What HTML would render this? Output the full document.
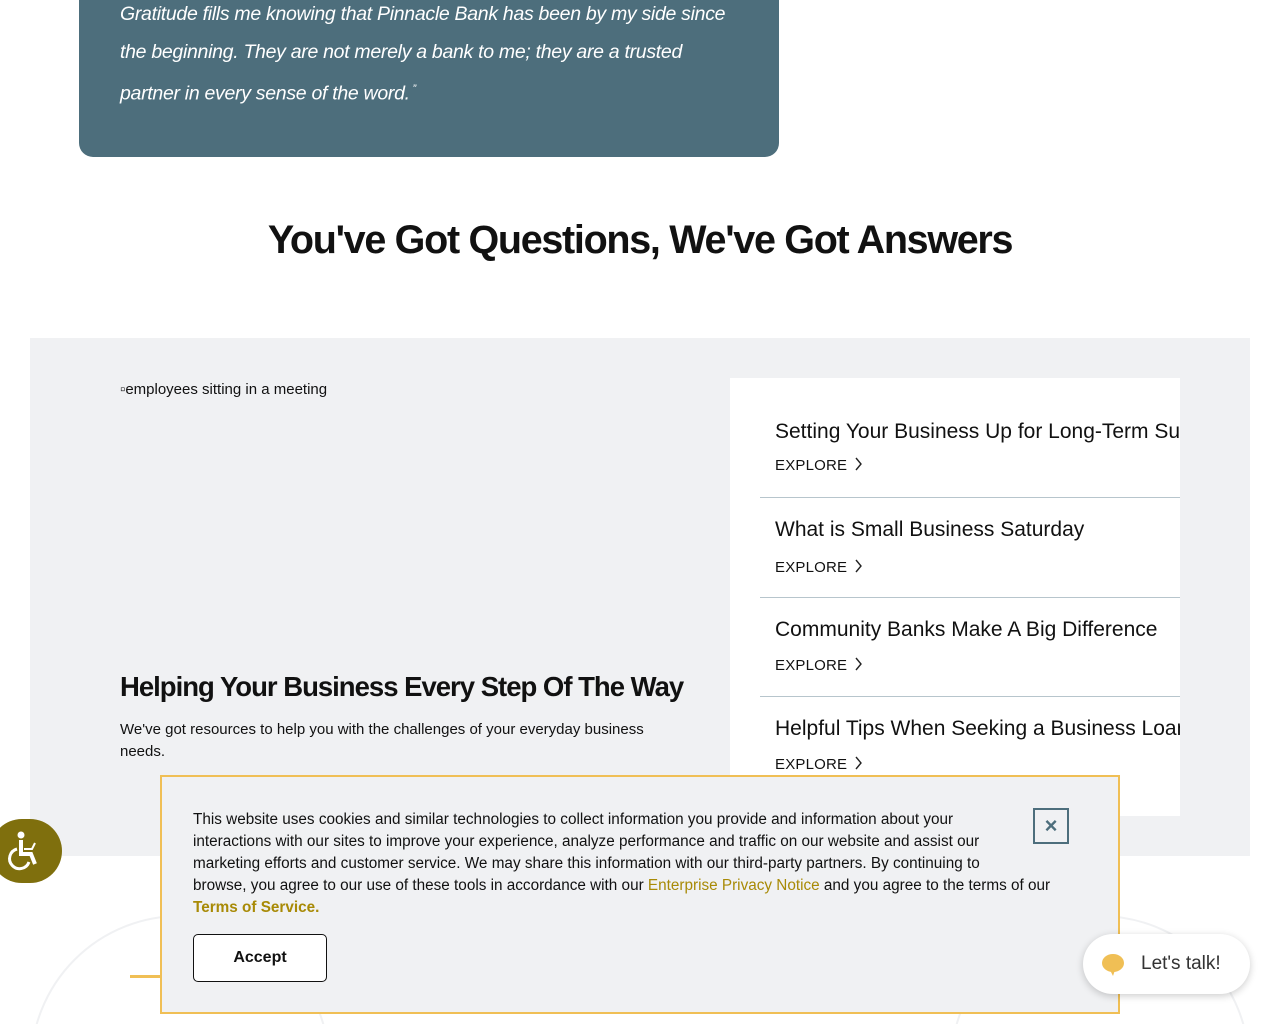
<!DOCTYPE html>
<html><head><meta charset="utf-8"><style>
*{margin:0;padding:0;box-sizing:border-box}
html,body{width:1280px;height:1024px;overflow:hidden}
body{position:relative;background:#fff;font-family:"Liberation Sans",sans-serif;color:#111}
.wrap{position:absolute;left:0;top:0;width:1280px;height:1024px;overflow:hidden}
.quote{position:absolute;left:79px;top:0;width:700px;height:157px;background:#4d6e7c;border-radius:0 0 14px 14px;color:#fff;font-style:italic;font-size:19.5px;line-height:37.5px;padding:0 0 0 41px;letter-spacing:-0.3px;white-space:nowrap}
.quote div{position:relative;top:-4px}
h1{position:absolute;top:218px;left:0;width:1280px;text-align:center;font-size:39.5px;font-weight:bold;letter-spacing:-1.3px}
.gray{position:absolute;left:30px;top:338px;width:1220px;height:518px;background:#f0f1f3}
.alt{position:absolute;left:120px;top:381px;font-size:15px}
.h2{position:absolute;left:120px;top:671px;font-size:27.5px;font-weight:bold;letter-spacing:-1px}
.p{position:absolute;left:120px;top:719px;width:560px;font-size:15px;line-height:22px}
.card{position:absolute;left:730px;top:378px;width:450px;height:438px;background:#fff;overflow:hidden}
.item{position:absolute;left:30px;width:440px;border-bottom:1px solid #b7c5cc;height:100px}
.item .t{position:absolute;left:15px;top:20px;font-size:21px;white-space:nowrap}
.item .e{position:absolute;left:15px;top:60px;font-size:15px;letter-spacing:.2px}
.item .e svg{vertical-align:-2px;margin-left:6px}
.cookie{position:absolute;left:160px;top:775px;width:960px;height:239px;background:#f0f1f3;border:2px solid #f0bf55}
.ctext{position:absolute;left:31px;top:32px;font-size:15.3px;line-height:22px;letter-spacing:0;white-space:nowrap}
.ctext b{color:#a88a06;font-weight:normal}
.acc{position:absolute;left:31px;top:157px;width:134px;height:48px;border:1px solid #111;border-radius:5px;background:#fff;text-align:center;line-height:46px;font-weight:bold;font-size:16px}
.x{position:absolute;left:871px;top:31px;width:36px;height:36px;border:2px solid #4d6e7c;color:#4d6e7c;text-align:center;line-height:32px;font-size:22px;font-weight:bold}
.acc11y{position:absolute;left:-10px;top:819px;width:72px;height:64px;border-radius:32px;background:#7f6f0d}
.talk{position:absolute;left:1083px;top:934px;width:167px;height:60px;border-radius:30px;background:#fff;box-shadow:0 2px 8px rgba(0,0,0,.2);font-size:19px;color:#333}
.clip{position:absolute;left:0;top:900px;width:1280px;height:124px;overflow:hidden}
</style></head><body><div class="wrap">
<div class="quote"><div>Gratitude fills me knowing that Pinnacle Bank has been by my side since<br>the beginning. They are not merely a bank to me; they are a trusted<br>partner in every sense of the word.<sup style="font-size:11px"> ”</sup></div></div>
<h1>You've Got Questions, We've Got Answers</h1>
<div class="gray"></div>
<div class="alt">▫employees sitting in a meeting</div>
<div class="h2">Helping Your Business Every Step Of The Way</div>
<div class="p">We've got resources to help you with the challenges of your everyday business needs.</div>
<div class="card">
<div class="item" style="top:20px"><div class="t" style="top:22px">Setting Your Business Up for Long-Term Success</div><div class="e" style="top:58px">EXPLORE<svg width="10" height="16" viewBox="0 0 10 16"><path d="M3 2l5 6-5 6" stroke="#222" stroke-width="1.4" fill="none"/></svg></div></div>
<div class="item" style="top:120px"><div class="t">What is Small Business Saturday</div><div class="e">EXPLORE<svg width="10" height="16" viewBox="0 0 10 16"><path d="M3 2l5 6-5 6" stroke="#222" stroke-width="1.4" fill="none"/></svg></div></div>
<div class="item" style="top:219px"><div class="t" style="top:21px">Community Banks Make A Big Difference</div><div class="e" style="top:59px">EXPLORE<svg width="10" height="16" viewBox="0 0 10 16"><path d="M3 2l5 6-5 6" stroke="#222" stroke-width="1.4" fill="none"/></svg></div></div>
<div class="item" style="top:318px;border:none"><div class="t" style="top:21px">Helpful Tips When Seeking a Business Loan</div><div class="e" style="top:59px">EXPLORE<svg width="10" height="16" viewBox="0 0 10 16"><path d="M3 2l5 6-5 6" stroke="#222" stroke-width="1.4" fill="none"/></svg></div></div>
</div>
<div class="clip">
<div style="position:absolute;left:30px;top:15px;width:300px;height:300px;border-radius:50%;border:2px solid #f0f1f3"></div>
<div style="position:absolute;left:130px;top:75px;width:32px;height:3px;background:#f0bf55"></div>
<div style="position:absolute;left:950px;top:15px;width:300px;height:300px;border-radius:50%;border:2px solid #f0f1f3"></div>
</div>
<div class="acc11y"><svg width="72" height="64" viewBox="0 0 72 64"><circle cx="31" cy="16" r="3.5" fill="#fff"/><path d="M31 21v14h10l4 10" stroke="#fff" stroke-width="4" fill="none"/><path d="M27 30a10 10 0 1 0 12 13" stroke="#fff" stroke-width="3" fill="none"/><path d="M34 30h8l3-6" stroke="#fff" stroke-width="2" fill="none"/></svg></div>
<div class="cookie">
<div class="ctext">This website uses cookies and similar technologies to collect information you provide and information about your<br>interactions with our sites to improve your experience, analyze performance and traffic on our website and assist our<br>marketing efforts and customer service. We may share this information with our third-party partners. By continuing to<br>browse, you agree to our use of these tools in accordance with our <b>Enterprise Privacy Notice</b> and you agree to the terms of our<br><b style="font-weight:bold">Terms of Service.</b></div>
<div class="acc">Accept</div>
<div class="x">×</div>
</div>
<div class="talk"><svg style="position:absolute;left:18px;top:19px" width="24" height="24" viewBox="0 0 24 24"><ellipse cx="12" cy="10" rx="11" ry="9" fill="#f0bf55"/><path d="M9 17l3 6 2-6z" fill="#f0bf55"/></svg><span style="position:absolute;left:58px;top:19px">Let's talk!</span></div>
</div></body></html>
